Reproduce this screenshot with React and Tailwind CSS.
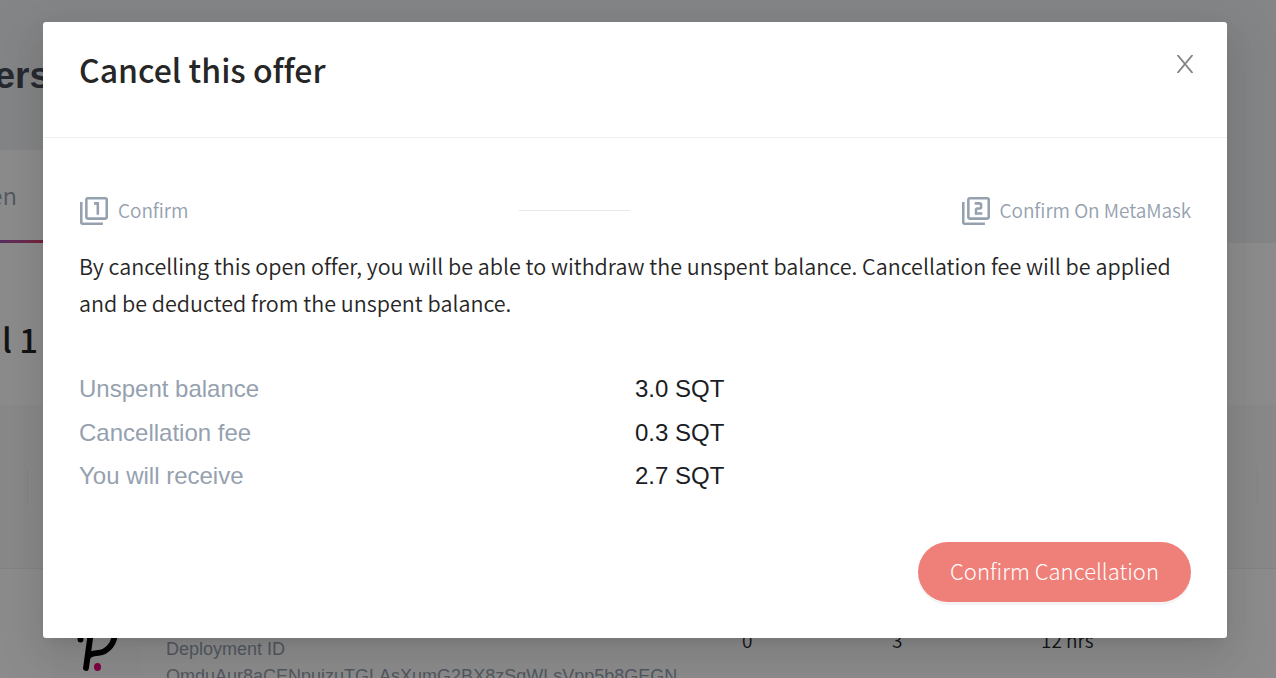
const stepPaths = {
  1: 'M14 15h2V5h-4v2h2v8z',
  2: 'M17 13h-4v-2h2c1.1 0 2-.89 2-2V7c0-1.11-.9-2-2-2h-4v2h4v2h-2c-1.1 0-2 .89-2 2v4h6v-2z',
};

function StepIcon({ step }) {
  return (
    <svg viewBox="1 1 22 22" className="h-7 w-7 shrink-0" fill="currentColor">
      <path d="M3 5H1v16c0 1.1.9 2 2 2h16v-2H3V5zM21 1H7c-1.1 0-2 .9-2 2v14c0 1.1.9 2 2 2h14c1.1 0 2-.9 2-2V3c0-1.1-.9-2-2-2zm0 16H7V3h14v14z" />
      <path d={stepPaths[step]} />
    </svg>
  );
}

function Step({ step, children }) {
  return (
    <div className="flex items-center gap-[10px] text-[#95a1af]">
      <StepIcon step={step} />
      <span className="pb-[2px] text-[19px] leading-7 font-[350] tracking-[-0.05px] whitespace-nowrap">{children}</span>
    </div>
  );
}

const rows = [
  ['Unspent balance', '3.0 SQT'],
  ['Cancellation fee', '0.3 SQT'],
  ['You will receive', '2.7 SQT'],
];

function Page() {
  return (
    <div className="flex h-full w-full flex-col overflow-hidden bg-white">
      <div className="flex h-[150px] shrink-0 bg-[#f0f2f5]">
        <div className="flex w-[50px] justify-end pt-[54px] font-['Liberation_Sans',sans-serif] text-[37px] leading-[44px] font-bold text-[#454d58]">ers</div>
      </div>
      <div className="flex h-[93px] shrink-0 justify-between">
        <div className="flex h-[93px] w-[400px] flex-col justify-between">
          <div className="flex w-[17px] justify-end pt-[27px] text-[24px] leading-9 font-[350] whitespace-nowrap text-[#95a1af]">en</div>
          <div className="h-[3px] w-[44px] bg-linear-to-r from-[#a253b0] to-[#d94070]" />
        </div>
        <div className="w-[200px] bg-[#f0f2f5]" />
      </div>
      <div className="flex h-[162px] shrink-0">
        <div className="flex w-[38px] justify-end pt-[72px] text-[33px] leading-[48px] font-medium whitespace-nowrap text-[#262626]">al 1</div>
      </div>
      <div className="flex h-[164px] shrink-0 items-center justify-between border-b border-[#f0f0f0] bg-[#fafafa] pr-[18px] pl-[27px]">
        <div className="h-9 w-px bg-[#eeeeee]" />
        <div className="h-9 w-px bg-[#eeeeee]" />
      </div>
      <div className="flex h-[109px] shrink-0 overflow-hidden">
        <div className="ml-[52px] flex h-[109px] w-[90px] items-end bg-[#fdfdfd]">
          <svg viewBox="0 0 90 60" className="h-[60px] w-[90px]" fill="none" stroke="#000" strokeLinecap="round" strokeLinejoin="round">
            <path d="M28.500 10v11.500M39.500 10 34 50M36.500 38.500c3-5 10-2 15.500-5 7-4 10-9 11.500-20" strokeWidth="5.800" />
            <ellipse cx="45.500" cy="49" rx="3.500" ry="4" fill="#e6007a" stroke="none" />
          </svg>
        </div>
        <div className="ml-6 w-[540px] pt-[67px] font-['Liberation_Sans',sans-serif] text-[18px] leading-[27px] whitespace-nowrap text-[#95a1af]">
          <div>Deployment ID</div>
          <div>QmduAur8aCENpuizuTGLAsXumG2BX8zSqWLsVpp5b8GEGN</div>
        </div>
        <div className="ml-[36px] w-[150px] pt-[56px] text-[19px] leading-[30px] font-[350] text-[#262a33]">0</div>
        <div className="w-[149px] pt-[56px] text-[19px] leading-[30px] font-[350] text-[#262a33]">3</div>
        <div className="pt-[56px] text-[19px] leading-[30px] font-[350] text-[#262a33]">12 hrs</div>
      </div>
    </div>
  );
}

function CancelDialog() {
  return (
    <section className="h-[616px] w-[1184px] rounded-[3px] bg-white shadow-[0_6px_12px_-8px_rgba(0,0,0,0.12),0_12px_32px_0_rgba(0,0,0,0.08),0_18px_56px_16px_rgba(0,0,0,0.05)]">
      <header className="flex h-[116px] justify-between border-b border-[#f0f0f0] pt-[22px] pr-[33px] pl-[36px]">
        <h1 className="text-[32px] leading-[50px] font-medium text-[#262626]">Cancel this offer</h1>
        <button aria-label="Close" className="h-fit pt-[11px]">
          <svg viewBox="0 0 18 18" className="h-[18px] w-[18px]" fill="none" stroke="#858585" strokeWidth="1.900">
            <path d="M1.500 0 16.500 18M16.500 0 1.500 18" />
          </svg>
        </button>
      </header>
      <div className="px-[36px] pt-[59px]">
        <div className="flex h-7 items-center justify-between pl-px">
          <Step step={1}>Confirm</Step>
          <div className="mb-px h-px w-[111px] bg-[#e8e8e8]" />
          <Step step={2}>Confirm On MetaMask</Step>
        </div>
        <p className="mt-[22px] text-[21.5px] leading-[37px] font-[350] whitespace-nowrap text-[#262626]">
          By cancelling this open offer, you will be able to withdraw the unspent balance. Cancellation fee will be applied<br />and be deducted from the unspent balance.
        </p>
        <dl className="mt-[46px] font-['Liberation_Sans',sans-serif] text-[24px] leading-[43.5px]">
          {rows.map(([label, value]) => (
            <div key={label} className="grid grid-cols-2">
              <dt className="text-[#95a1af]">{label}</dt>
              <dd className="text-[#1a1d24]">{value}</dd>
            </div>
          ))}
        </dl>
        <div className="mt-[44.5px] flex justify-end">
          <button className="h-[60px] w-[273px] rounded-full bg-[#ef8079] pb-[3px] text-[22px] font-light text-white shadow-[0_3px_0_rgba(0,0,0,0.045)]">Confirm Cancellation</button>
        </div>
      </div>
    </section>
  );
}

export default function App() {
  return (
    <main className="relative h-[678px] w-[1276px] overflow-hidden font-['Noto_Sans_CJK_SC',sans-serif] [font-variant-ligatures:none]">
      <Page />
      <div className="absolute inset-0 flex bg-black/45 pt-[22px] pl-[43px]">
        <CancelDialog />
      </div>
    </main>
  );
}
